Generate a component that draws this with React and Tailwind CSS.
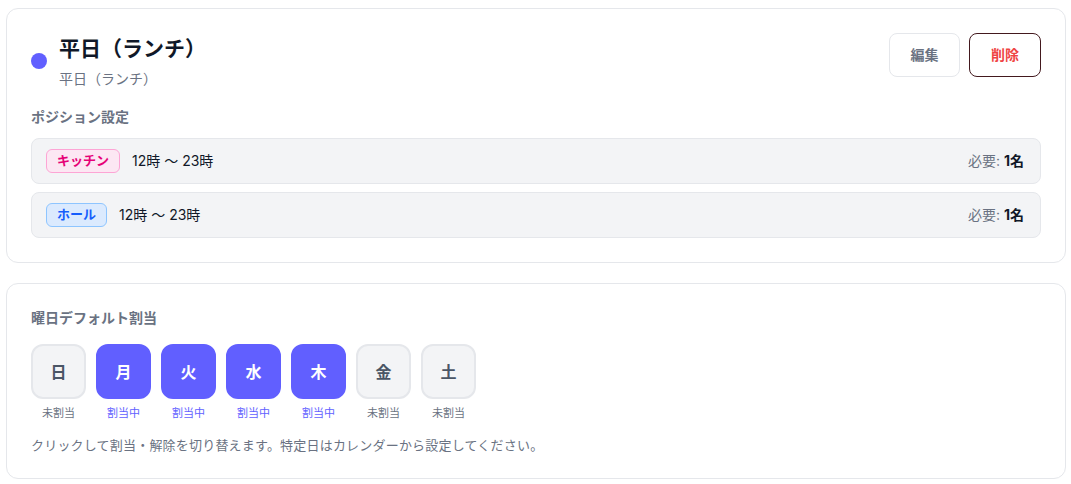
import { useState } from "react";

const positions = [
  { name: "キッチン", badge: "bg-pink-100 border-pink-300 text-pink-600", start: "12時", end: "23時", count: 1 },
  { name: "ホール", badge: "bg-blue-100 border-blue-300 text-blue-600", start: "12時", end: "23時", count: 1 },
];

const initialDays = [
  { label: "日", on: false },
  { label: "月", on: true },
  { label: "火", on: true },
  { label: "水", on: true },
  { label: "木", on: true },
  { label: "金", on: false },
  { label: "土", on: false },
];

export default function App() {
  const [days, setDays] = useState(initialDays);

  const toggle = (i) =>
    setDays((prev) => prev.map((d, j) => (j === i ? { ...d, on: !d.on } : d)));

  return (
    <div
      className="flex flex-col gap-5 bg-white pl-1.5 pr-[5px] pt-2 pb-1.5"
      style={{ fontFamily: 'Inter, "Noto Sans CJK JP", sans-serif' }}
    >
      <section className="rounded-xl border border-gray-200 bg-white p-6">
        <div className="flex items-start justify-between">
          <div className="flex items-center gap-3">
            <span className="h-4 w-4 rounded-full bg-indigo-500" />
            <div>
              <h2 className="text-[21px] font-bold leading-8 text-gray-900">平日（ランチ）</h2>
              <p className="mt-1 text-sm leading-5 text-gray-500">平日（ランチ）</p>
            </div>
          </div>
          <div className="flex gap-[9px]">
            <button className="h-11 w-[71px] rounded-lg border border-gray-200 bg-white text-sm font-semibold text-gray-500">
              編集
            </button>
            <button className="h-11 w-[72px] rounded-lg border border-[#43191e] bg-white text-sm font-semibold text-[#ef4444]">
              削除
            </button>
          </div>
        </div>

        <h3 className="mt-[18px] text-sm font-semibold leading-5 text-gray-500">ポジション設定</h3>
        <div className="mt-[11px] flex flex-col gap-2">
          {positions.map((p) => (
            <div
              key={p.name}
              className="flex h-[46px] items-center rounded-lg border border-gray-200 bg-gray-100 pl-[14px] pr-4"
            >
              <span className={`flex h-6 items-center rounded-md border px-2.5 text-[13px] font-bold ${p.badge}`}>
                {p.name}
              </span>
              <span className="ml-3 text-sm text-gray-900">
                {p.start} 〜 {p.end}
              </span>
              <span className="ml-auto text-sm text-gray-500">
                必要: <span className="font-bold text-gray-900">{p.count}名</span>
              </span>
            </div>
          ))}
        </div>
      </section>

      <section className="rounded-xl border border-gray-200 bg-white px-6 pt-6 pb-6">
        <h3 className="text-sm font-semibold leading-5 text-gray-500">曜日デフォルト割当</h3>
        <div className="mt-4 flex gap-2.5">
          {days.map((d, i) => (
            <div key={d.label} className="flex flex-col items-center">
              <button
                onClick={() => toggle(i)}
                className={
                  d.on
                    ? "flex h-[55px] w-[55px] items-center justify-center rounded-xl border-2 border-indigo-500 bg-indigo-500 text-base font-bold text-white"
                    : "flex h-[55px] w-[55px] items-center justify-center rounded-xl border-2 border-gray-200 bg-gray-100 text-base font-bold text-gray-600"
                }
              >
                {d.label}
              </button>
              <span className={d.on ? "mt-1.5 text-[11px] leading-4 text-indigo-500" : "mt-1.5 text-[11px] leading-4 text-gray-500"}>
                {d.on ? "割当中" : "未割当"}
              </span>
            </div>
          ))}
        </div>
        <p className="mt-[15px] text-[13px] leading-[18px] tracking-[0.2px] text-gray-500">
          クリックして割当・解除を切り替えます。特定日はカレンダーから設定してください。
        </p>
      </section>
    </div>
  );
}
